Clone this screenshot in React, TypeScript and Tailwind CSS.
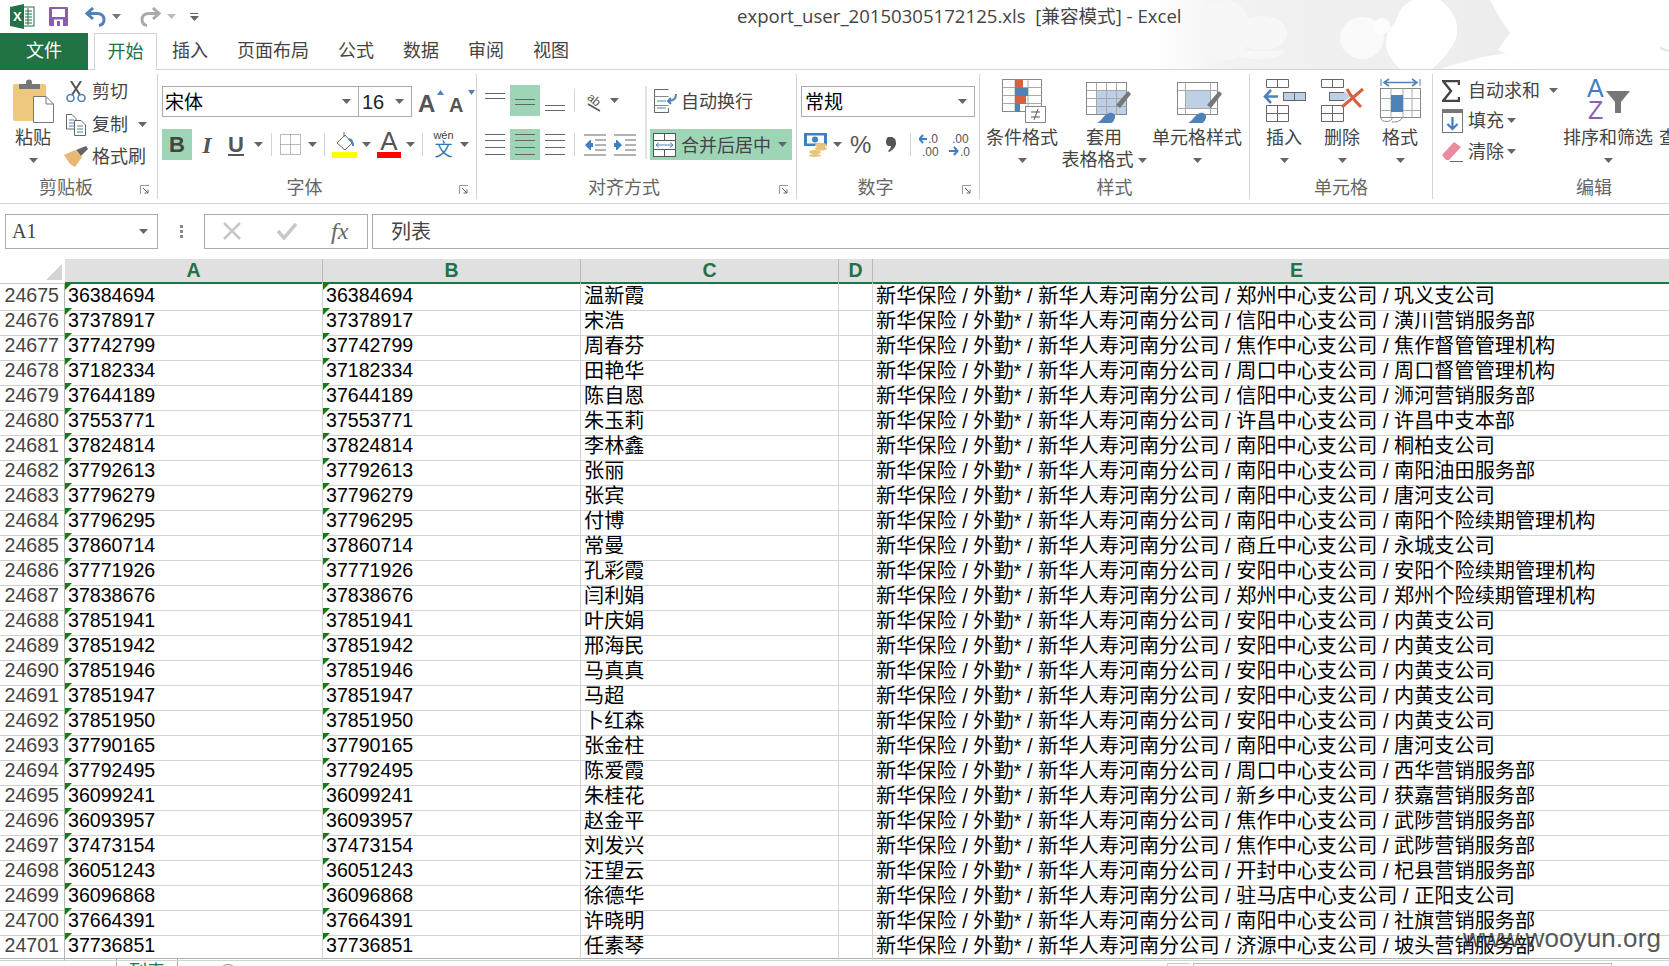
import React from 'react';

const P = '新华保险 / 外勤* / 新华人寿河南分公司 / ';
const rows: [number, string, string, string][] = [
  [24675, '36384694', '温新霞', '郑州中心支公司 / 巩义支公司'],
  [24676, '37378917', '宋浩', '信阳中心支公司 / 潢川营销服务部'],
  [24677, '37742799', '周春芬', '焦作中心支公司 / 焦作督管管理机构'],
  [24678, '37182334', '田艳华', '周口中心支公司 / 周口督管管理机构'],
  [24679, '37644189', '陈自恩', '信阳中心支公司 / 浉河营销服务部'],
  [24680, '37553771', '朱玉莉', '许昌中心支公司 / 许昌中支本部'],
  [24681, '37824814', '李林鑫', '南阳中心支公司 / 桐柏支公司'],
  [24682, '37792613', '张丽', '南阳中心支公司 / 南阳油田服务部'],
  [24683, '37796279', '张宾', '南阳中心支公司 / 唐河支公司'],
  [24684, '37796295', '付博', '南阳中心支公司 / 南阳个险续期管理机构'],
  [24685, '37860714', '常曼', '商丘中心支公司 / 永城支公司'],
  [24686, '37771926', '孔彩霞', '安阳中心支公司 / 安阳个险续期管理机构'],
  [24687, '37838676', '闫利娟', '郑州中心支公司 / 郑州个险续期管理机构'],
  [24688, '37851941', '叶庆娟', '安阳中心支公司 / 内黄支公司'],
  [24689, '37851942', '邢海民', '安阳中心支公司 / 内黄支公司'],
  [24690, '37851946', '马真真', '安阳中心支公司 / 内黄支公司'],
  [24691, '37851947', '马超', '安阳中心支公司 / 内黄支公司'],
  [24692, '37851950', '卜红森', '安阳中心支公司 / 内黄支公司'],
  [24693, '37790165', '张金柱', '南阳中心支公司 / 唐河支公司'],
  [24694, '37792495', '陈爱霞', '周口中心支公司 / 西华营销服务部'],
  [24695, '36099241', '朱桂花', '新乡中心支公司 / 获嘉营销服务部'],
  [24696, '36093957', '赵金平', '焦作中心支公司 / 武陟营销服务部'],
  [24697, '37473154', '刘发兴', '焦作中心支公司 / 武陟营销服务部'],
  [24698, '36051243', '汪望云', '开封中心支公司 / 杞县营销服务部'],
  [24699, '36096868', '徐德华', '驻马店中心支公司 / 正阳支公司'],
  [24700, '37664391', '许晓明', '南阳中心支公司 / 社旗营销服务部'],
  [24701, '37736851', '任素琴', '济源中心支公司 / 坡头营销服务部'],
];

const Caret = ({ color = '#666' }: { color?: string }) => (
  <svg width="9" height="5" viewBox="0 0 9 5" className="shrink-0">
    <polygon points="0,0 9,0 4.5,5" fill={color} />
  </svg>
);

const CaretBox = ({ w }: { w: string }) => (
  <div className={`${w} h-full flex items-center justify-center shrink-0`}>
    <Caret />
  </div>
);

const Launcher = () => (
  <svg width="10" height="10" viewBox="0 0 10 10" className="shrink-0">
    <path d="M0.5 9V0.5H9" fill="none" stroke="#999" />
    <path d="M3 3l5 5M8 4.5V8H4.5" fill="none" stroke="#666" />
  </svg>
);

const VSep = ({ ml }: { ml: string }) => <div className={`${ml} w-px h-[23px] bg-[#d4d4d4] shrink-0`} />;

function GroupLabel({ text, launcher = true }: { text: string; launcher?: boolean }) {
  return (
    <div className="flex items-center h-[22px] text-[18px] leading-[22px] text-[#666]">
      <div className="flex-1 text-center whitespace-nowrap">{text}</div>
      {launcher && (
        <div className="ml-[8px] mr-[7px] mt-[3px]">
          <Launcher />
        </div>
      )}
    </div>
  );
}

function BigBtn({ w, icon, label, second, caret = true, cls = '' }: { w: string; icon: React.ReactNode; label: string; second?: string; caret?: boolean; cls?: string }) {
  return (
    <div className={`${w} ${cls} shrink-0 flex flex-col items-center pt-[5px] text-[18px] text-[#444]`}>
      <div className="h-[44px] flex items-center justify-center">{icon}</div>
      <div className="mt-[4px] h-[22px] leading-[22px] whitespace-nowrap">{label}</div>
      <div className="h-[22px] leading-[22px] flex items-center gap-[4px] whitespace-nowrap">
        {second}
        {caret && <Caret />}
      </div>
    </div>
  );
}

/* three to four flat lines, used by every alignment button */
function Lines({ ys }: { ys: number[] }) {
  return (
    <svg width="20" height="24" viewBox="0 0 20 24">
      {ys.map((y) => (
        <line key={y} x1={0} x2={20} y1={y + 0.5} y2={y + 0.5} stroke="#666" />
      ))}
    </svg>
  );
}

const AlignBtn = ({ ys, on = false }: { ys: number[]; on?: boolean }) => (
  <div className={`w-[30px] h-[31px] flex items-center justify-center shrink-0 ${on ? 'bg-[#9fd5b7]' : ''}`}>
    <Lines ys={ys} />
  </div>
);

const ExcelLogo = () => (
  <svg width="25" height="25" viewBox="0 0 25 25">
    <rect x="12" y="3" width="12" height="19" fill="#fff" stroke="#217346" />
    <path d="M15 7h7M15 10h7M15 13h7M15 16h7M15 19h7M18 4v17" stroke="#217346" />
    <polygon points="0,3 14,0 14,25 0,22" fill="#217346" />
    <text x="3" y="17" fontSize="13" fontWeight="700" fill="#fff" fontFamily="Liberation Sans">X</text>
  </svg>
);

const SaveIcon = () => (
  <svg width="19" height="19" viewBox="0 0 19 19">
    <rect width="19" height="19" rx="1" fill="#8a5db0" />
    <rect x="3" y="2" width="13" height="8" fill="#fff" />
    <rect x="5" y="12.5" width="9" height="6.5" fill="#fff" />
    <rect x="8" y="14" width="3" height="5" fill="#8a5db0" />
  </svg>
);

const UndoIcon = ({ color, flip = false }: { color: string; flip?: boolean }) => (
  <svg width="21" height="20" viewBox="0 0 21 20" style={flip ? { transform: 'scaleX(-1)' } : undefined}>
    <path d="M8 1L2 6.5 8 12" fill="none" stroke={color} strokeWidth="3" />
    <path d="M3 6.5h9c5 0 7 3 7 6s-2 5.500-5 6" fill="none" stroke={color} strokeWidth="3" />
  </svg>
);

const PasteIcon = () => (
  <svg width="41" height="44" viewBox="0 0 41 44">
    <rect x="0" y="5" width="33" height="37" rx="2" fill="#edc87e" />
    <rect x="6" y="5" width="21" height="5" fill="#777" />
    <circle cx="16" cy="3.500" r="3" fill="#777" />
    <path d="M20.500 17.500H33l7.500 7.500v18.500h-20z" fill="#fff" stroke="#777" />
    <path d="M33 17.500V25h7.500" fill="none" stroke="#777" />
  </svg>
);

const ScissorsIcon = () => (
  <svg width="20" height="22" viewBox="0 0 20 22">
    <path d="M5 0l9 14M15 0L6 14" stroke="#555" strokeWidth="2" />
    <circle cx="4.500" cy="17" r="3.500" fill="none" stroke="#4f82b8" strokeWidth="1.600" />
    <circle cx="15.500" cy="17" r="3.500" fill="none" stroke="#4f82b8" strokeWidth="1.600" />
  </svg>
);

const CopyIcon = () => (
  <svg width="20" height="22" viewBox="0 0 20 22">
    <path d="M0.500 0.500H6l4 4V15H0.500z" fill="#fff" stroke="#666" />
    <path d="M3 6h5M3 9h5M3 12h5" stroke="#4f82b8" />
    <path d="M8.500 6.500H15l4.500 4.500v10.500h-11z" fill="#fff" stroke="#666" />
    <path d="M11 12h6M11 15h6M11 18h6" stroke="#4f82b8" />
  </svg>
);

const BrushIcon = () => (
  <svg width="24" height="22" viewBox="0 0 24 22">
    <polygon points="0,9 11,4 18,11 11,21 6,18" fill="#e8b872" />
    <polygon points="12,4 22,0 24,3 17,10" fill="#666" />
  </svg>
);

const GrowA = ({ up }: { up: boolean }) => (
  <div className={`relative h-[31px] flex items-end text-[#555] font-bold font-['Liberation_Sans',sans-serif] ${up ? 'w-[20px] text-[24px] leading-[26px]' : 'w-[20px] text-[20px] leading-[24px]'}`}>
    A
    <svg width="7" height="5" viewBox="0 0 7 5" className="absolute right-[-6px] top-[4px]">
      <polygon points={up ? '0,5 7,5 3.500,0' : '0,0 7,0 3.500,5'} fill="#4f82b8" />
    </svg>
  </div>
);

const BorderIcon = () => (
  <svg width="21" height="21" viewBox="0 0 21 21">
    <path d="M0.500 0.500h20v20h-20zM10.500 0.500v20M0.500 10.500h20" fill="none" stroke="#777" strokeDasharray="1 1" />
  </svg>
);

const FillIcon = () => (
  <svg width="25" height="26" viewBox="0 0 25 26">
    <path d="M5 11l8-8 7 8-7 7z" fill="#fff" stroke="#666" />
    <path d="M12 0v5" stroke="#666" />
    <path d="M17 7c3 1 4 3 4 7" fill="none" stroke="#4f82b8" strokeWidth="2" />
    <rect y="20" width="25" height="6" fill="#ffff00" />
  </svg>
);

const FontColorIcon = () => (
  <div className="relative w-[24px] h-[31px] flex justify-center">
    <span className="text-[#555] text-[26px] leading-[26px] mt-[-1px] font-['Liberation_Sans',sans-serif]">A</span>
    <div className="absolute left-0 right-0 bottom-[2px] h-[6px] bg-[#ff0000]" />
  </div>
);

const WenIcon = () => (
  <div className="w-[23px] flex flex-col items-center leading-none">
    <span className="text-[11px] leading-[11px] text-[#444]">wén</span>
    <span className="text-[18px] leading-[18px] text-[#2f78b7]">文</span>
  </div>
);

const OrientIcon = () => (
  <svg width="20" height="22" viewBox="0 0 20 22">
    <text x="2" y="13" fontSize="12" fill="#555" fontFamily="Liberation Sans" transform="rotate(40 8 10)">ab</text>
    <path d="M3 14l12 7" stroke="#555" strokeWidth="1.500" />
  </svg>
);

const IndentIcon = ({ dir }: { dir: 'dec' | 'inc' }) => (
  <svg width="22" height="22" viewBox="0 0 22 22">
    <path d={dir === 'dec' ? 'M0 1h22M11 6h11M11 11h11M11 16h11M0 21h22' : 'M0 1h22M0 21h22M11 6h11M11 11h11M11 16h11'} stroke="#666" />
    <path d={dir === 'dec' ? 'M6 6l-5 5 5 5h1v-3h2v-4H7V6z' : 'M3 6l5 5-5 5H2v-3H0V9h2V6z'} fill="#3f7fc1" />
  </svg>
);

const WrapIcon = () => (
  <svg width="23" height="24" viewBox="0 0 23 24">
    <path d="M0.500 0.500h14M0.500 0.500v23M0.500 23.500h14M14.500 19v4.500" fill="none" stroke="#666" />
    <path d="M0.500 7.500h14M0.500 16.500h14" stroke="#888" />
    <path d="M3 12h9M3 19h9" stroke="#4f82b8" />
    <path d="M22 5c0 5-3 7-8 7M17 9l-3 3 3 3" fill="none" stroke="#4f82b8" strokeWidth="2" />
  </svg>
);

const MergeIcon = () => (
  <svg width="23" height="24" viewBox="0 0 23 24">
    <rect x="0.500" y="0.500" width="22" height="23" fill="#fff" stroke="#555" />
    <path d="M0.500 7.500h22M0.500 16.500h22M11.500 0.500v7M11.500 16.500v7" stroke="#555" />
    <path d="M3 12h17M6 9.500L3 12l3 2.500M17 9.500l3 2.500-3 2.500" fill="none" stroke="#4f82b8" />
  </svg>
);

const MoneyIcon = () => (
  <svg width="23" height="24" viewBox="0 0 23 24">
    <rect width="23" height="13" fill="#3f7fc1" />
    <rect x="3" y="2.500" width="17" height="8" fill="#fff" />
    <circle cx="11" cy="6.500" r="3" fill="#3f7fc1" />
    <ellipse cx="17" cy="12" rx="6" ry="2" fill="#e8c27f" />
    <ellipse cx="17" cy="15.500" rx="6" ry="2" fill="#e8c27f" />
    <ellipse cx="11" cy="19" rx="6" ry="2" fill="#e8c27f" />
    <ellipse cx="11" cy="22.500" rx="6" ry="1.500" fill="#e8c27f" />
  </svg>
);

const CommaIcon = () => (
  <svg width="10" height="15" viewBox="0 0 10 15">
    <path d="M2 0h4c3 1 4 3 4 6 0 4-3 7-7 9l-1-1c2-2 3-3 3-5H3C1 9 0 7 0 5c0-3 1-4 2-5z" fill="#555" />
  </svg>
);

const DecimalIcon = ({ more }: { more: boolean }) => (
  <svg width="24" height="26" viewBox="0 0 24 26" fontFamily="Liberation Sans" fontSize="12" fill="#555">
    {more ? (
      <>
        <path d="M8 7H1M4 3L0.500 7 4 11" fill="none" stroke="#3f7fc1" strokeWidth="2" />
        <text x="9" y="11">.0</text>
        <text x="3" y="24">.00</text>
      </>
    ) : (
      <>
        <text x="3" y="11">.00</text>
        <path d="M0 19h8M5 15l3.500 4L5 23" fill="none" stroke="#3f7fc1" strokeWidth="2" />
        <text x="11" y="24">.0</text>
      </>
    )}
  </svg>
);

const CondIcon = () => (
  <svg width="44" height="44" viewBox="0 0 44 44" className="ml-[4px]">
    <rect x="0.500" y="0.500" width="39" height="32" fill="#fff" stroke="#888" />
    <path d="M0.500 8.500h39M0.500 16.500h39M0.500 24.500h39M13 0.500v32M26 0.500v32" stroke="#aaa" />
    <rect x="13" y="1" width="8" height="8" fill="#d9603f" />
    <rect x="13" y="9" width="13" height="8" fill="#4f82b8" />
    <rect x="13" y="17" width="11" height="8" fill="#d9603f" />
    <rect x="13" y="25" width="5" height="8" fill="#4f82b8" />
    <rect x="23.500" y="27.500" width="20" height="16" fill="#fff" stroke="#888" />
    <path d="M29 33h9M29 38h9M36 30l-4 11" stroke="#555" />
  </svg>
);

const PaintBrush = () => (
  <>
    <polygon points="42,12 45,15 34,29 30,26" fill="#777" />
    <path d="M11 44c4-1 6-8 12-10 4-1 7 2 6 5-1 2-2 5-4 5z" fill="#4f82b8" />
  </>
);

const TableStyleIcon = () => (
  <svg width="46" height="44" viewBox="0 0 46 44" className="ml-[10px]">
    <rect x="0.500" y="3.500" width="40" height="32" fill="#fff" stroke="#888" />
    <rect x="10" y="11" width="30" height="24" fill="#bdd0e6" />
    <path d="M0.500 11.500h40M0.500 19.500h40M0.500 27.500h40M10.500 3.500v32M20.500 3.500v32M30.500 3.500v32" stroke="#a8a8a8" />
    <PaintBrush />
  </svg>
);

const CellStyleIcon = () => (
  <svg width="46" height="44" viewBox="0 0 46 44" className="ml-[6px]">
    <rect x="0.500" y="3.500" width="40" height="32" fill="#fff" stroke="#888" />
    <rect x="8" y="11" width="26" height="19" fill="#bdd0e6" />
    <path d="M8.500 3.500v32M33.500 3.500v32M0.500 11.500h40M0.500 29.500h40" stroke="#a8a8a8" />
    <PaintBrush />
  </svg>
);

const CellBlock = ({ x, y }: { x: number; y: number }) => (
  <path d={`M${x}.500 ${y}.500h22v8h-22zM${x + 11}.500 ${y}.500v8`} fill="#fff" stroke="#666" />
);

const InsertIcon = () => (
  <svg width="43" height="44" viewBox="0 0 43 44">
    <CellBlock x={3} y={0} />
    <path d="M3.500 26.500h22v16h-22zM14.500 26.500v16M3.500 34.500h22" fill="#fff" stroke="#666" />
    <rect x="20.500" y="13.500" width="22" height="8" fill="#bdd0e6" stroke="#666" />
    <path d="M31.500 13.500v8" stroke="#666" />
    <path d="M15 17.500H2M8 11l-6 6.500L8 24" fill="none" stroke="#4f82b8" strokeWidth="2.600" />
  </svg>
);

const DeleteIcon = () => (
  <svg width="43" height="44" viewBox="0 0 43 44">
    <CellBlock x={0} y={0} />
    <path d="M0.500 26.500h22v16h-22zM11.500 26.500v16M0.500 34.500h22" fill="#fff" stroke="#666" />
    <rect x="8.500" y="13.500" width="15" height="8" fill="#bdd0e6" stroke="#666" />
    <polygon points="23,12 29,17.500 23,23" fill="#bdd0e6" />
    <path d="M21 28L42 10M26 10c3 6 9 13 14 18" fill="none" stroke="#d9603f" strokeWidth="3" />
  </svg>
);

const FormatIcon = () => (
  <svg width="41" height="46" viewBox="0 0 41 46">
    <path d="M1 1v7M40 1v7" stroke="#4f82b8" />
    <path d="M4 4.500h33M9 1L4 4.500 9 8M32 1l5 3.500L32 8" fill="none" stroke="#4f82b8" strokeWidth="1.600" />
    <rect x="0.500" y="10.500" width="40" height="29" fill="#fff" stroke="#888" />
    <path d="M0.500 20.500h40M0.500 32.500h40M11 10.500v29M23 10.500v29M32 10.500v29" stroke="#aaa" />
    <rect x="11" y="17" width="12" height="17" fill="#4f82b8" />
    <path d="M0.500 39.500c1 3 3 4 6 4s5-1 6-4M12 44c3 0 8 0 10-4" fill="none" stroke="#888" />
  </svg>
);

const SumIcon = () => (
  <svg width="18" height="22" viewBox="0 0 18 22">
    <path d="M17 5V1H1l8 10-8 10h16v-4" fill="none" stroke="#444" strokeWidth="2.400" />
  </svg>
);

const FillDownIcon = () => (
  <svg width="21" height="24" viewBox="0 0 21 24">
    <rect x="0.500" y="0.500" width="20" height="23" fill="#fff" stroke="#777" />
    <rect width="21" height="4" fill="#777" />
    <path d="M10.500 8v12M5.500 15l5 5 5-5" fill="none" stroke="#3f7fc1" strokeWidth="2.200" />
  </svg>
);

const EraserIcon = () => (
  <svg width="22" height="20" viewBox="0 0 22 20">
    <polygon points="0,13 12,0 19,5 7,18 4,18" fill="#e98a9f" />
    <path d="M8 19.500h13" stroke="#666" />
  </svg>
);

const SortIcon = () => (
  <svg width="43" height="44" viewBox="0 0 43 44" fontFamily="Liberation Sans" fontWeight="400">
    <text x="0" y="18" fontSize="25" fill="#3f7fc1">A</text>
    <text x="1" y="40" fontSize="25" fill="#8e5fb4">Z</text>
    <polygon points="19,12 43,12 34,23 34,34 28,34 28,23" fill="#777" />
  </svg>
);

const cols = 'grid grid-cols-[65px_258px_258px_258px_34px_848px]';

function Cloud() {
  return (
    <svg className="absolute left-0 top-0 pointer-events-none" width="1669" height="69" viewBox="0 0 1669 69">
      <defs>
        <linearGradient id="fade" x1="0" x2="1" y1="0" y2="0">
          <stop offset="0" stopColor="#f3f3f3" stopOpacity="0" />
          <stop offset="0.2" stopColor="#f2f2f2" />
          <stop offset="1" stopColor="#ececec" />
        </linearGradient>
      </defs>
      <path d="M1150 0H1490L1500 18 1510 33 1498 50 1540 69H1150z" fill="url(#fade)" />
      <ellipse cx="1225" cy="30" rx="26" ry="30" fill="#f7f7f7" />
      <ellipse cx="1262" cy="33" rx="25" ry="17" fill="#f7f7f7" />
      <circle cx="1260" cy="22" r="6" fill="#f7f7f7" />
      <path d="M1200 52c30-6 60 2 85 -2 -4 10-30 12-48 6-14-5-24-2-37-4z" fill="#f7f7f7" />
      <ellipse cx="1362" cy="38" rx="22" ry="21" fill="#fafafa" />
      <circle cx="1382" cy="26" r="8" fill="#fdfdfd" />
      <path d="M1396 22c2-18 20-26 30-22h14c14 10 20 24 16 38-6 14-14 22-24 31h-32c-10-10-14-18-14-24 0-12 4-18 10-23z" fill="#fff" />
      <path d="M1440 69c30-10 70-22 130-16 40 2 70 10 99 16z" fill="#fff" opacity="0.9" />
      <path d="M1660 48l9 3" stroke="#e4e4e4" strokeWidth="2" />
    </svg>
  );
}

export default function App() {
  return (
    <div className="relative w-[1669px] h-[966px] overflow-hidden bg-white text-[#444] font-['Liberation_Sans','Noto_Sans_CJK_SC',sans-serif]">
      {/* title bar + tabs */}
      <div className="relative h-[70px] border-b border-[#d4d4d4]">
        <Cloud />
        <div className="relative flex items-center h-[33px] pl-[10px]">
          <ExcelLogo />
          <div className="ml-[14px]"><SaveIcon /></div>
          <div className="ml-[17px]"><UndoIcon color="#4f82b8" /></div>
          <div className="ml-[6px]"><Caret color="#777" /></div>
          <div className="ml-[19px]"><UndoIcon color="#aaaaaa" flip /></div>
          <div className="ml-[6px]"><Caret color="#bbb" /></div>
          <div className="ml-[14px] flex flex-col gap-[2px]">
            <div className="w-[8px] h-px bg-[#666]" />
            <Caret color="#666" />
          </div>
          <div className="ml-[538px] -mt-[2px] text-[18.6px] whitespace-nowrap font-['Open_Sans','Noto_Sans_CJK_SC',sans-serif] text-[#444]">
            export_user_20150305172125.xls&nbsp;&nbsp;[兼容模式] - Excel
          </div>
        </div>
        <div className="relative flex h-[37px] text-[18px]">
          <div className="w-[88px] bg-[#217346] text-white flex items-center justify-center">文件</div>
          <div className="ml-[6px] w-[63px] h-[37px] bg-white border border-b-0 border-[#d4d4d4] text-[#217346] flex items-center justify-center">开始</div>
          <div className="ml-[15px] flex items-center gap-[29px] text-[#444]">
            <span>插入</span>
            <span>页面布局</span>
            <span>公式</span>
            <span>数据</span>
            <span>审阅</span>
            <span>视图</span>
          </div>
        </div>
      </div>

      {/* ribbon */}
      <div className="h-[134px] pt-[4px] border-b border-[#d4d4d4] flex">
        <div className="w-[158px] h-[125px] shrink-0 border-r border-[#d4d4d4] flex flex-col">
          <div className="h-[105px] flex">
            <BigBtn w="w-[58px]" cls="ml-[4px]" icon={<PasteIcon />} label="粘贴" />
            <div className="flex flex-col pl-[4px] text-[18px] leading-[22px]">
              <div className="h-[34px] pt-[1px] flex items-center"><div className="w-[26px]"><ScissorsIcon /></div>剪切</div>
              <div className="h-[33px] flex items-center"><div className="w-[26px]"><CopyIcon /></div>复制<div className="ml-[10px]"><Caret /></div></div>
              <div className="h-[32px] flex items-center"><div className="w-[26px] -ml-[2px] mr-[2px]"><BrushIcon /></div>格式刷</div>
            </div>
          </div>
          <GroupLabel text="剪贴板" />
        </div>

        <div className="w-[319px] h-[125px] shrink-0 border-r border-[#d4d4d4] flex flex-col">
          <div className="h-[105px] pt-[12px] pl-[4px]">
            <div className="flex h-[31px] items-center">
              <div className="w-[197px] h-[31px] border border-[#ababab] flex items-center pl-[2px] pr-[7px] text-[19px] text-black">
                <span className="flex-1 pt-[3px]">宋体</span>
                <Caret />
              </div>
              <div className="w-[54px] h-[31px] -ml-px border border-[#ababab] flex items-center pl-[3px] pr-[7px] text-[20px] text-[#222]">
                <span className="flex-1">16</span>
                <Caret />
              </div>
              <div className="ml-[6px]"><GrowA up /></div>
              <div className="ml-[11px]"><GrowA up={false} /></div>
            </div>
            <div className="flex h-[31px] items-center mt-[12px]">
              <div className="w-[30px] h-[31px] bg-[#9fd5b7] flex items-center justify-center text-[22px] font-bold text-[#444]">B</div>
              <div className="w-[30px] flex items-center justify-center text-[24px] font-bold italic text-[#555] font-['Liberation_Serif',serif]">I</div>
              <div className="w-[28px] flex items-center justify-center text-[22px] font-bold underline text-[#555]">U</div>
              <CaretBox w="w-[16px]" />
              <VSep ml="ml-[5px]" />
              <div className="ml-[8px]"><BorderIcon /></div>
              <CaretBox w="w-[22px]" />
              <VSep ml="ml-[1px]" />
              <div className="ml-[7px]"><FillIcon /></div>
              <CaretBox w="w-[18px]" />
              <div className="ml-[2px]"><FontColorIcon /></div>
              <CaretBox w="w-[18px]" />
              <VSep ml="ml-[3px]" />
              <div className="ml-[9px]"><WenIcon /></div>
              <CaretBox w="w-[18px]" />
            </div>
          </div>
          <GroupLabel text="字体" />
        </div>

        <div className="w-[320px] h-[125px] shrink-0 border-r border-[#d4d4d4] flex flex-col">
          <div className="h-[105px] pt-[11px] flex">
            <div className="w-[168px] pl-[3px] shrink-0">
              <div className="flex h-[31px] items-center">
                <AlignBtn ys={[4, 9]} />
                <AlignBtn ys={[10, 15]} on />
                <AlignBtn ys={[16, 21]} />
                <VSep ml="ml-[4px]" />
                <div className="ml-[10px]"><OrientIcon /></div>
                <CaretBox w="w-[18px]" />
              </div>
              <div className="flex h-[31px] items-center mt-[13px]">
                <AlignBtn ys={[1, 7, 14, 21]} />
                <AlignBtn ys={[1, 7, 14, 21]} on />
                <AlignBtn ys={[1, 7, 14, 21]} />
                <VSep ml="ml-[4px]" />
                <div className="ml-[9px]"><IndentIcon dir="dec" /></div>
                <div className="ml-[8px]"><IndentIcon dir="inc" /></div>
              </div>
            </div>
            <div className="w-[2px] h-[73px] mt-[1px] bg-[#e4e4e4] shrink-0" />
            <div className="text-[18px]">
              <div className="flex h-[31px] items-center pl-[7px]">
                <WrapIcon />
                <span className="ml-[4px] pt-[4px]">自动换行</span>
              </div>
              <div className="flex h-[31px] w-[142px] ml-[3px] mt-[13px] items-center bg-[#9fd5b7] pl-[3px] pr-[5px]">
                <MergeIcon />
                <span className="ml-[5px] flex-1 pt-[4px]">合并后居中</span>
                <Caret />
              </div>
            </div>
          </div>
          <GroupLabel text="对齐方式" />
        </div>

        <div className="w-[183px] h-[125px] shrink-0 border-r border-[#d4d4d4] flex flex-col">
          <div className="h-[105px] pt-[12px]">
            <div className="ml-[4px] w-[174px] h-[31px] border border-[#ababab] flex items-center pl-[3px] pr-[7px] text-[19px] text-black">
              <span className="flex-1 pt-[3px]">常规</span>
              <Caret />
            </div>
            <div className="flex h-[31px] items-center mt-[12px] pl-[7px]">
              <MoneyIcon />
              <CaretBox w="w-[20px]" />
              <div className="ml-[3px] w-[20px] text-[24px] text-[#555] leading-[24px] text-center">%</div>
              <div className="ml-[16px]"><CommaIcon /></div>
              <VSep ml="ml-[14px]" />
              <div className="ml-[8px]"><DecimalIcon more /></div>
              <div className="ml-[6px]"><DecimalIcon more={false} /></div>
            </div>
          </div>
          <GroupLabel text="数字" />
        </div>

        <div className="w-[270px] h-[125px] shrink-0 border-r border-[#d4d4d4] flex flex-col">
          <div className="h-[105px] flex">
            <BigBtn w="w-[84px]" icon={<CondIcon />} label="条件格式" />
            <BigBtn w="w-[86px]" cls="-ml-[3px]" icon={<TableStyleIcon />} label="套用" second="表格格式" />
            <BigBtn w="w-[90px]" cls="ml-[5px]" icon={<CellStyleIcon />} label="单元格样式" />
          </div>
          <GroupLabel text="样式" launcher={false} />
        </div>

        <div className="w-[183px] h-[125px] shrink-0 border-r border-[#d4d4d4] flex flex-col">
          <div className="h-[105px] flex pl-[5px]">
            <BigBtn w="w-[58px]" icon={<InsertIcon />} label="插入" />
            <BigBtn w="w-[58px]" icon={<DeleteIcon />} label="删除" />
            <BigBtn w="w-[58px]" icon={<FormatIcon />} label="格式" />
          </div>
          <GroupLabel text="单元格" launcher={false} />
        </div>

        <div className="w-[322px] h-[125px] shrink-0 flex flex-col">
          <div className="h-[105px] flex pl-[9px]">
            <div className="w-[121px] pt-[2px] shrink-0 flex flex-col text-[18px] leading-[22px]">
              <div className="h-[29px] flex items-center"><div className="w-[26px]"><SumIcon /></div>自动求和<div className="ml-[9px]"><Caret /></div></div>
              <div className="h-[31px] flex items-center"><div className="w-[26px]"><FillDownIcon /></div>填充<div className="ml-[3px]"><Caret /></div></div>
              <div className="h-[31px] flex items-center"><div className="w-[26px]"><EraserIcon /></div>清除<div className="ml-[3px]"><Caret /></div></div>
            </div>
            <BigBtn w="w-[90px]" icon={<SortIcon />} label="排序和筛选" />
            <div className="ml-[6px] pt-[53px] text-[18px] leading-[22px] whitespace-nowrap">查找和选择</div>
          </div>
          <GroupLabel text="编辑" launcher={false} />
        </div>
      </div>

      {/* formula bar */}
      <div className="h-[55px] flex items-center pb-[1px] pl-[5px]">
        <div className="w-[153px] h-[35px] border border-[#ababab] flex items-center pl-[6px] pr-[9px] text-[20px] text-[#444] font-['Liberation_Serif',serif]">
          <span className="flex-1">A1</span>
          <Caret />
        </div>
        <div className="w-[46px] flex flex-col items-center gap-[2px]">
          <div className="w-[3px] h-[3px] bg-[#888]" />
          <div className="w-[3px] h-[3px] bg-[#888]" />
          <div className="w-[3px] h-[3px] bg-[#888]" />
        </div>
        <div className="w-[164px] h-[35px] border border-[#ababab] flex items-center">
          <svg width="18" height="18" viewBox="0 0 18 18" className="ml-[18px]">
            <path d="M1 1l16 16M17 1L1 17" stroke="#c8c8c8" strokeWidth="2.500" />
          </svg>
          <svg width="20" height="18" viewBox="0 0 20 18" className="ml-[36px]">
            <path d="M1 9l6 7L19 2" fill="none" stroke="#c8c8c8" strokeWidth="3.500" />
          </svg>
          <span className="ml-[34px] text-[24px] leading-[24px] italic text-[#666] font-['Liberation_Serif',serif]">fx</span>
        </div>
        <div className="ml-[4px] flex-1 h-[35px] border-y border-l border-[#ababab] flex items-center pl-[18px] pt-[2px] text-[20px] text-[#444]">列表</div>
      </div>

      {/* column headers */}
      <div className={`${cols} h-[24px]`}>
        <div className="relative border-b border-[#c8c8c8]">
          <div className="absolute right-[3px] top-[5px] w-0 h-0 border-l-[16px] border-b-[16px] border-l-transparent border-b-[#d4d4d4]" />
        </div>
        {['A', 'B', 'C', 'D', 'E'].map((c) => (
          <div key={c} className="bg-[#e0e0e0] border-r border-[#b8b8b8] border-b-2 border-b-[#217346] text-[#217346] font-bold text-[19.5px] leading-[23px] text-center">
            {c}
          </div>
        ))}
      </div>

      {/* rows */}
      <div className="text-[19.6px] leading-[25px] text-black">
        {rows.map((r) => (
          <div key={r[0]} className={`${cols} h-[25px]`}>
            <div className="border-r border-b border-r-[#b4b4b4] border-b-[#d0d0d0] text-right pr-[5px] text-[#444]">{r[0]}</div>
            <div className="relative border-r border-b border-[#d4d4d4] pl-[3px]">
              <div className="absolute left-0 top-0 w-0 h-0 border-t-[7px] border-r-[7px] border-t-[#0e7f0e] border-r-transparent" />
              {r[1]}
            </div>
            <div className="relative border-r border-b border-[#d4d4d4] pl-[3px]">
              <div className="absolute left-0 top-0 w-0 h-0 border-t-[7px] border-r-[7px] border-t-[#0e7f0e] border-r-transparent" />
              {r[1]}
            </div>
            <div className="border-r border-b border-[#d4d4d4] pl-[3px] text-[20.15px] leading-[27px]">{r[2]}</div>
            <div className="border-r border-b border-[#d4d4d4]" />
            <div className="border-b border-[#d4d4d4] pl-[3px] text-[20.15px] leading-[27px] whitespace-nowrap">{P + r[3]}</div>
          </div>
        ))}
      </div>

      {/* sheet tabs, cut off by the window */}
      <div className="h-[8px] border-t border-[#b0b0b0] flex overflow-hidden">
        <div className="ml-[116px] w-[62px] h-[20px] border-x border-[#aaa] text-center text-[#217346] text-[18px] pt-[3px] leading-[20px]">列表</div>
        <div className="ml-[41px] mt-[5px] w-[18px] h-[18px] rounded-full border border-[#888]" />
        <div className="ml-[930px] mt-[4px] w-[23px] h-[8px] border-l border-t border-[#ccc]" />
        <div className="ml-[3px] mt-[4px] w-[419px] h-[8px] border-x border-t border-[#bbb]" />
      </div>

      <div className="absolute right-[8px] bottom-[13px] text-[26px] leading-[30px] text-[#3c3c3c] opacity-85 tracking-[0.1px]">www.wooyun.org</div>
    </div>
  );
}
